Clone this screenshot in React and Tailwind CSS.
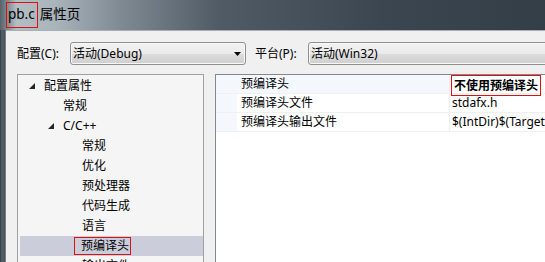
const font = "font-['Noto_Sans','Noto_Sans_CJK_SC',sans-serif]";

const tree = [
    { label: '配置属性', level: 0, open: true },
    { label: '常规', level: 1 },
    { label: 'C/C++', level: 1, open: true },
    { label: '常规', level: 2 },
    { label: '优化', level: 2 },
    { label: '预处理器', level: 2 },
    { label: '代码生成', level: 2 },
    { label: '语言', level: 2 },
    { label: '预编译头', level: 2, selected: true },
    { label: '输出文件', level: 2 },
];

const props = [
    { name: '预编译头', value: '不使用预编译头', bold: true, active: true },
    { name: '预编译头文件', value: 'stdafx.h' },
    { name: '预编译头输出文件', value: '$(IntDir)$(TargetName).pch' },
];

function Expander() {
    return (
        <svg width="6" height="6" viewBox="0 0 6 6" className="shrink-0">
            <polygon points="6,0 6,6 0,6" fill="#262626" />
        </svg>
    );
}

function Combo({ text, className, arrow }) {
    return (
        <div className={`h-[23px] rounded-[3px] border border-[#8e8f8f] bg-[linear-gradient(180deg,#f2f2f2_0%,#ebebeb_50%,#dddddd_51%,#cfcfcf_100%)] flex items-center pl-[2px] pr-[4px] shadow-[inset_0_0_0_1px_#f8f8f8] ${className}`}>
            <span className="flex-1 text-[12px] text-black truncate">{text}</span>
            {arrow && (
                <svg width="7" height="4" viewBox="0 0 7 4">
                    <polygon points="0,0 7,0 3.5,4" fill="#000" />
                </svg>
            )}
        </div>
    );
}

export default function App() {
    return (
        <div className={`w-[545px] h-[262px] overflow-hidden flex flex-col bg-[#f0f0f0] ${font}`}>
            <div className="h-[30px] shrink-0 flex items-center pl-[6px] bg-[linear-gradient(90deg,#56616a_0%,#b2bdc4_3%,#a9b4bb_10%,#7f8a93_22%,#505b65_40%,#3c4650_70%,#343e47_100%)]">
                <span className="h-[26px] border border-[#e01010] flex items-center pl-[1px] pr-[2px] text-[13.5px] text-black leading-none">
                    pb.c
                </span>
                <span className="ml-[2px] text-[13.5px] text-black leading-none">属性页</span>
            </div>
            <div className="flex-1 flex min-h-0">
                <div className="w-[6px] shrink-0 bg-[linear-gradient(90deg,#2f363b_0%,#59626a_30%,#4a535a_80%,#9aa1a6_100%)]" />
                <div className="flex-1 flex flex-col pl-[11px] pt-[11px] min-w-0 border-t border-[#a7afb5]">
                    <div className="flex items-center h-[23px] whitespace-nowrap">
                        <span className="text-[12px] text-black w-[53px] shrink-0">配置(C):</span>
                        <Combo text="活动(Debug)" className="w-[176px] shrink-0" arrow />
                        <span className="text-[12px] text-black ml-[9px] w-[53px] shrink-0">平台(P):</span>
                        <Combo text="活动(Win32)" className="w-[300px] shrink-0" />
                    </div>
                    <div className="flex flex-1 mt-[9px] min-h-0 gap-[11px]">
                        <div className="w-[187px] shrink-0 border border-[#a0a0a0] border-b-0 bg-[#f5f5f5] pt-[1px] overflow-hidden">
                            {tree.map((item, i) => (
                                <div
                                    key={i}
                                    className={`h-[20px] flex items-center text-[12px] text-black whitespace-nowrap ${item.selected ? 'bg-[#cbcdda] ml-[2px]' : ''}`}
                                    style={{ paddingLeft: (item.selected ? 9 : 11) + item.level * 19 }}
                                >
                                    <span className="w-[15px] shrink-0 flex">
                                        {item.open && <Expander />}
                                    </span>
                                    {item.selected ? (
                                        <span className="-ml-[8px] h-[18px] border-[1.5px] border-[#e01010] flex items-center pl-[6px] pr-[1px]">
                                            {item.label}
                                        </span>
                                    ) : (
                                        <span>{item.label}</span>
                                    )}
                                </div>
                            ))}
                        </div>
                        <div className="flex-1 border border-[#828790] border-r-0 border-b-0 bg-white min-w-0 overflow-hidden">
                            {props.map((p, i) => (
                                <div key={i} className="h-[19px] flex border-b border-[#f0f0f0] text-[12px] text-black whitespace-nowrap">
                                    <div className="w-[21px] shrink-0 bg-[#f4f7fc]" />
                                    <div className={`w-[213px] shrink-0 pl-[4px] flex items-center border-r border-[#f0f0f0] ${p.active ? 'bg-[#f4f7fc]' : ''}`}>
                                        {p.name}
                                    </div>
                                    <div className="flex-1 flex items-center pl-[1px]">
                                        {p.bold ? (
                                            <span className="h-[21px] mt-[3px] border-[1.5px] border-[#e01010] flex items-center px-[2px] font-bold">
                                                {p.value}
                                            </span>
                                        ) : (
                                            <span className="pl-[1px]">{p.value}</span>
                                        )}
                                    </div>
                                </div>
                            ))}
                        </div>
                    </div>
                </div>
            </div>
        </div>
    );
}
